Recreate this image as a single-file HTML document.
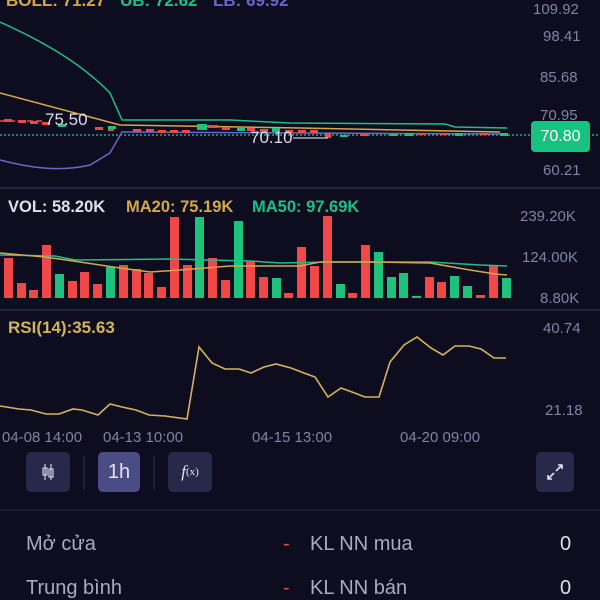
<!DOCTYPE html>
<html><head><meta charset="utf-8"><style>
html,body{margin:0;padding:0;background:#0e0d20;width:600px;height:600px;overflow:hidden;font-family:"Liberation Sans","DejaVu Sans",sans-serif}
.t{position:absolute;white-space:nowrap}
.ax{color:#7f84a6;font-size:15px}
.btn{position:absolute;top:452px;height:40px;background:#27284a;border-radius:5px;color:#e4e4f0;display:flex;align-items:center;justify-content:center}
.row{color:#a9abc0;font-size:20px}
</style></head><body>
<svg width="600" height="600" style="position:absolute;left:0;top:0">
<line x1="0" y1="188" x2="600" y2="188" stroke="#23243e" stroke-width="2"/>
<line x1="0" y1="310" x2="600" y2="310" stroke="#23243e" stroke-width="2"/>
<line x1="0" y1="510" x2="600" y2="510" stroke="#1d1e36" stroke-width="1.5"/>
<line x1="0" y1="135" x2="600" y2="135" stroke="#2fc0b0" stroke-width="1.2" stroke-dasharray="2,2"/>
<path d="M0,22 C40,40 80,62 110,93 L122,120 L230,120 L290,123 L445,124 L455,127 L507,128" fill="none" stroke="#1dbf86" stroke-width="1.5"/>
<path d="M0,160 C30,168 60,172 90,165 L110,153 L122,132 L500,134" fill="none" stroke="#6a66c8" stroke-width="1.5"/>
<path d="M0,93 L120,125 L300,128 L500,132" fill="none" stroke="#d4a84a" stroke-width="1.5"/>
<g fill="#f04848">
<rect x="4" y="119" width="8" height="3"/><rect x="18" y="120" width="8" height="3"/><rect x="30" y="121" width="8" height="3"/><rect x="42" y="122" width="8" height="3"/>
<rect x="95" y="127" width="8" height="3"/><rect x="108" y="128" width="6" height="3"/><rect x="133" y="129" width="8" height="3"/><rect x="146" y="129" width="8" height="3"/><rect x="158" y="130" width="8" height="3"/><rect x="170" y="130" width="8" height="3"/><rect x="182" y="130" width="8" height="3"/><rect x="208" y="125" width="10" height="3"/><rect x="222" y="127" width="8" height="3"/><rect x="247" y="128" width="8" height="3"/><rect x="260" y="129" width="8" height="3"/><rect x="285" y="130" width="8" height="3"/><rect x="298" y="130" width="8" height="3"/><rect x="310" y="130" width="8" height="3"/><rect x="325" y="133" width="6" height="5"/><rect x="360" y="134" width="8" height="2"/><rect x="418" y="133" width="8" height="2"/><rect x="440" y="133" width="8" height="2"/><rect x="480" y="133" width="8" height="2"/>
</g>
<g fill="#1fc27d">
<rect x="58" y="124" width="8" height="3"/><rect x="108" y="126" width="8" height="3"/><rect x="197" y="124" width="10" height="6"/><rect x="237" y="127" width="8" height="4"/><rect x="272" y="128" width="8" height="4"/><rect x="340" y="135" width="8" height="2"/><rect x="390" y="134" width="8" height="2"/><rect x="405" y="133" width="8" height="3"/><rect x="455" y="133" width="8" height="3"/><rect x="500" y="133" width="8" height="3"/>
</g>
<line x1="0" y1="121" x2="45" y2="121" stroke="#f04848" stroke-width="1.5" stroke-dasharray="6,3"/>
<line x1="293" y1="138" x2="328" y2="138" stroke="#c8c8d8" stroke-width="1.2"/>
<g fill="#f04848">
<rect x="4" y="258" width="9" height="40"/><rect x="17" y="283" width="9" height="15"/><rect x="29" y="290" width="9" height="8"/><rect x="42" y="245" width="9" height="53"/><rect x="68" y="281" width="9" height="17"/><rect x="80" y="272" width="9" height="26"/><rect x="93" y="284" width="9" height="14"/><rect x="119" y="265" width="9" height="33"/><rect x="132" y="269" width="9" height="29"/><rect x="144" y="273" width="9" height="25"/><rect x="157" y="287" width="9" height="11"/><rect x="170" y="217" width="9" height="81"/><rect x="183" y="265" width="9" height="33"/><rect x="208" y="258" width="9" height="40"/><rect x="221" y="280" width="9" height="18"/><rect x="246" y="261" width="9" height="37"/><rect x="259" y="277" width="9" height="21"/><rect x="284" y="293" width="9" height="5"/><rect x="297" y="247" width="9" height="51"/><rect x="310" y="266" width="9" height="32"/><rect x="323" y="216" width="9" height="82"/><rect x="348" y="293" width="9" height="5"/><rect x="361" y="245" width="9" height="53"/><rect x="425" y="277" width="9" height="21"/><rect x="437" y="282" width="9" height="16"/><rect x="476" y="295" width="9" height="3"/><rect x="489" y="266" width="9" height="32"/>
</g>
<g fill="#1fc27d">
<rect x="55" y="274" width="9" height="24"/><rect x="106" y="267" width="9" height="31"/><rect x="195" y="217" width="9" height="81"/><rect x="234" y="221" width="9" height="77"/><rect x="272" y="278" width="9" height="20"/><rect x="336" y="284" width="9" height="14"/><rect x="374" y="252" width="9" height="46"/><rect x="387" y="277" width="9" height="21"/><rect x="399" y="273" width="9" height="25"/><rect x="412" y="296" width="9" height="2"/><rect x="450" y="276" width="9" height="22"/><rect x="463" y="286" width="9" height="12"/><rect x="502" y="278" width="9" height="20"/>
</g>
<path d="M0,255 L55,256 L75,260 L170,259 L250,261 L280,263 L330,262 L430,262 L480,265 L507,266" fill="none" stroke="#1dbf86" stroke-width="1.5"/>
<path d="M0,253 L45,257 L80,262 L120,268 L150,272 L180,270 L230,266 L300,266 L320,262 L370,262 L430,263 L470,270 L495,274 L507,275" fill="none" stroke="#d4a84a" stroke-width="1.5"/>
<path d="M0,406 L19,409 L31,410 L46,414 L59,414 L73,409 L82,410 L98,415 L110,404 L122,407 L136,410 L149,415 L165,416 L187,419 L199,347 L212,363 L225,369 L239,369 L251,373 L264,367 L276,364 L291,368 L304,373 L315,377 L328,397 L341,388 L352,392 L365,397 L379,397 L390,362 L404,345 L417,337 L431,348 L443,355 L455,346 L469,346 L481,349 L494,358 L506,358" fill="none" stroke="#d4b45a" stroke-width="1.6"/>
<line x1="84" y1="456" x2="84" y2="490" stroke="#26273f" stroke-width="1.5"/>
<line x1="154" y1="456" x2="154" y2="490" stroke="#26273f" stroke-width="1.5"/>
</svg>
<div class="t" style="left:6px;top:-9px;font-size:17px;font-weight:bold;color:#d4a84a">BOLL: 71.27</div>
<div class="t" style="left:120px;top:-9px;font-size:17px;font-weight:bold;color:#1dbf86">UB: 72.62</div>
<div class="t" style="left:213px;top:-9px;font-size:17px;font-weight:bold;color:#6a66c8">LB: 69.92</div>
<div class="t ax" style="left:533px;top:1px">109.92</div>
<div class="t ax" style="left:543px;top:28px">98.41</div>
<div class="t ax" style="left:540px;top:69px">85.68</div>
<div class="t ax" style="left:540px;top:107px">70.95</div>
<div class="t ax" style="left:543px;top:162px">60.21</div>
<div class="t" style="left:531px;top:121px;width:59px;height:31px;background:#17c281;border-radius:4px;color:#fff;font-size:16px;line-height:31px;text-align:center">70.80</div>
<div class="t" style="left:45px;top:110px;font-size:17px;color:#dcdce8">75.50</div>
<div class="t" style="left:250px;top:128px;font-size:17px;color:#dcdce8">70.10</div>
<div class="t" style="left:8px;top:198px;font-size:16.5px;font-weight:bold;color:#e0e0ea">VOL: 58.20K</div>
<div class="t" style="left:126px;top:198px;font-size:16.5px;font-weight:bold;color:#d4a84a">MA20: 75.19K</div>
<div class="t" style="left:252px;top:198px;font-size:16.5px;font-weight:bold;color:#1dbf86">MA50: 97.69K</div>
<div class="t ax" style="left:520px;top:208px">239.20K</div>
<div class="t ax" style="left:522px;top:249px">124.00K</div>
<div class="t ax" style="left:540px;top:290px">8.80K</div>
<div class="t" style="left:8px;top:318px;font-size:17px;font-weight:bold;color:#d4b45a">RSI(14):35.63</div>
<div class="t ax" style="left:543px;top:320px">40.74</div>
<div class="t ax" style="left:545px;top:402px">21.18</div>
<div class="t ax" style="left:2px;top:429px">04-08 14:00</div>
<div class="t ax" style="left:103px;top:429px">04-13 10:00</div>
<div class="t ax" style="left:252px;top:429px">04-15 13:00</div>
<div class="t ax" style="left:400px;top:429px">04-20 09:00</div>
<div class="btn" style="left:26px;width:44px"><svg width="16" height="18"><path d="M5,1V17M11,1V17" stroke="#cfd0e6" stroke-width="1.2"/><rect x="3" y="5" width="4" height="7" fill="none" stroke="#cfd0e6" stroke-width="1.2"/><rect x="9" y="6" width="4" height="8" fill="none" stroke="#cfd0e6" stroke-width="1.2"/></svg></div>
<div class="btn" style="left:98px;width:42px;background:#4b4b86;font-size:20px">1h</div>
<div class="btn" style="left:168px;width:44px;font-size:17px;font-style:italic;font-family:'Liberation Serif',serif">f<span style="font-size:11px;font-style:normal">(x)</span></div>
<div class="btn" style="left:536px;width:38px"><svg width="20" height="20"><path d="M11,9L17,3M13,3H17V7M9,11L3,17M3,13V17H7" fill="none" stroke="#e0e0f0" stroke-width="1.6"/></svg></div>
<div class="t row" style="left:26px;top:533px">Mở cửa</div>
<div class="t row" style="left:283px;top:533px;color:#e04848">-</div>
<div class="t row" style="left:310px;top:533px">KL NN mua</div>
<div class="t row" style="left:560px;top:533px;color:#e0e0ea">0</div>
<div class="t row" style="left:26px;top:577px">Trung bình</div>
<div class="t row" style="left:283px;top:577px;color:#e04848">-</div>
<div class="t row" style="left:310px;top:577px">KL NN bán</div>
<div class="t row" style="left:560px;top:577px;color:#e0e0ea">0</div>
</body></html>
